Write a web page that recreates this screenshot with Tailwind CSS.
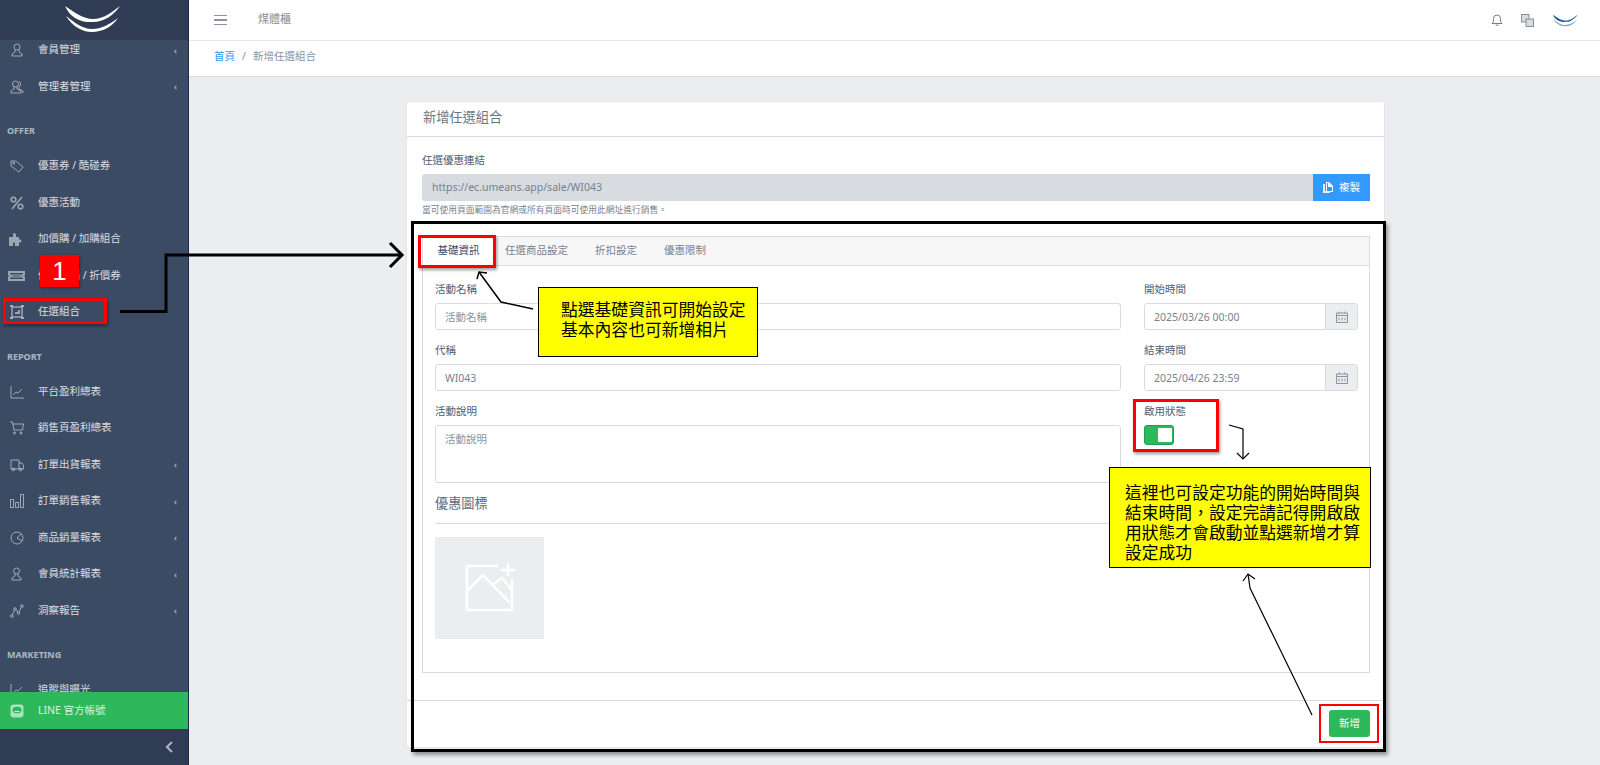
<!DOCTYPE html>
<html lang="zh-Hant">
<head>
  <meta charset="UTF-8" />
  <title>新增任選組合</title>
  <script src="https://cdn.jsdelivr.net/npm/@tailwindcss/browser@4"></script>
</head>
<body class="bg-[#ebedef]">
<div class="relative flex h-[765px] w-[1600px] overflow-hidden font-['Noto_Sans','Noto_Sans_CJK_TC',sans-serif] text-[10.5px] text-[#4f5d73]">

  <!-- Sidebar -->
  <aside class="flex h-full w-[189px] shrink-0 flex-col border-r border-[#1c2a4d] bg-[#3c4b64] text-white/80">
    <div class="z-10 flex h-10 shrink-0 items-center justify-center bg-[#303c54] pb-[2px] pr-[2px]">
      <svg width="60" height="30" viewBox="63 4 60 30" fill="#fff">
        <path d="M65 6C70 18 82 23 93 22C104 22 114 15 120 6C112 12 104 19 93 19C83 19 74 12 65 6Z"/>
        <path d="M66 16C72 26 82 32 92 32C102 32 112 27 118 18C110 24 102 29 92 29C82 29 74 22 66 16Z"/>
      </svg>
    </div>

    <nav class="min-h-0 flex-1 overflow-hidden">
      <div class="mt-[-8px]">
        <div class="flex h-[36.5px] items-center pl-[10px] pr-[11px]">
          <svg class="h-[14px] w-[14px] text-white/50" viewBox="0 0 14 14" fill="none" stroke="currentColor"><circle cx="7" cy="4" r="3"/><path d="M5 7v2l-3 2v2h10v-2L9 9V7"/></svg>
          <span class="ml-[14px] flex-1">會員管理</span><span class="text-[9px] font-bold text-white/50">‹</span>
        </div>
        <div class="flex h-[36.5px] items-center pl-[10px] pr-[11px]">
          <svg class="h-[14px] w-[14px] text-white/50" viewBox="0 0 14 14" fill="none" stroke="currentColor"><circle cx="5.5" cy="4" r="3"/><path d="M4 7v2l-3 2v2h10v-2L7 9V7M9 1.3a3 3 0 0 1 0 5.4V9l4 2v2"/></svg>
          <span class="ml-[14px] flex-1">管理者管理</span><span class="text-[9px] font-bold text-white/50">‹</span>
        </div>

        <div class="h-[43px] pt-[18px] text-[9px] leading-4 font-bold text-white/60 pl-[7px]">OFFER</div>
        <div class="flex h-[36.5px] items-center pl-[10px]">
          <svg class="h-[14px] w-[14px] text-white/50" viewBox="0 0 14 14" fill="none" stroke="currentColor"><path d="M1 2h5l7 6-4 5-8-6Z"/><circle cx="3.7" cy="4.3" r="1"/></svg>
          <span class="ml-[14px]">優惠券 / 酷碰券</span>
        </div>
        <div class="flex h-[36.5px] items-center pl-[10px]">
          <svg class="h-[14px] w-[14px] text-white/50" viewBox="0 0 14 14" fill="none" stroke="currentColor" stroke-width="1.6"><path d="M12 1 2 13"/><circle cx="3.5" cy="3.5" r="2.3"/><circle cx="10.5" cy="10.5" r="2.3"/></svg>
          <span class="ml-[14px]">優惠活動</span>
        </div>
        <div class="flex h-[36.5px] items-center pl-[8px]">
          <svg class="h-[16px] w-[16px] text-white/50" viewBox="0 0 16 16" fill="currentColor"><path d="M1 6h4V3.500a1.500 1.500 0 0 1 3 0V6h3v2.500h1a1.500 1.500 0 0 1 0 3h-1V15H7v-2.500a1 1 0 0 0-2 0V15H1Z"/></svg>
          <span class="ml-[14px]">加價購 / 加購組合</span>
        </div>
        <div class="flex h-[36.5px] items-center pl-[8px]">
          <svg class="h-[16px] w-[17px] text-white/50" viewBox="0 0 17 16" fill="none" stroke="currentColor" stroke-width="2"><path d="M1 4h15v2.500a1.500 1.500 0 0 0 0 3V12H1V9.500a1.500 1.500 0 0 0 0-3Z"/><path d="M4 7h9v2H4Z" stroke-width="1"/></svg>
          <span class="ml-[13px]">優惠代碼 / 折價券</span>
        </div>
        <div class="flex h-[36.5px] items-center pl-[10px]">
          <svg class="h-[14px] w-[14px] text-white/50" viewBox="0 0 14 14" fill="none" stroke="currentColor" stroke-width="1.500"><path d="M2 2h10v10H2Z"/><path d="M0 1h3M11 1h3M0 13h3M11 13h3M5 8h4V5" stroke-width="2"/></svg>
          <span class="ml-[14px]">任選組合</span>
        </div>

        <div class="h-[43px] pt-[18px] text-[9px] leading-4 font-bold text-white/60 pl-[7px]">REPORT</div>
        <div class="flex h-[36.5px] items-center pl-[10px]">
          <svg class="h-[14px] w-[14px] text-white/50" viewBox="0 0 14 14" fill="none" stroke="currentColor"><path d="M1 1v12h13M3 10l3-3 2 1 4-4"/></svg>
          <span class="ml-[14px]">平台盈利總表</span>
        </div>
        <div class="flex h-[36.5px] items-center pl-[10px]">
          <svg class="h-[14px] w-[14px] text-white/50" viewBox="0 0 14 14" fill="none" stroke="currentColor"><path d="M0 1h2.500l1.500 8h8.500L13.500 3H3"/><circle cx="4.500" cy="12" r="1"/><circle cx="11" cy="12" r="1"/></svg>
          <span class="ml-[14px]">銷售頁盈利總表</span>
        </div>
        <div class="flex h-[36.5px] items-center pl-[10px] pr-[11px]">
          <svg class="h-[14px] w-[14px] text-white/50" viewBox="0 0 14 14" fill="none" stroke="currentColor"><path d="M1 2h8v9H1ZM9 5h3l1.500 2.500V11H9"/><circle cx="3.500" cy="11.500" r="1.300"/><circle cx="10.500" cy="11.500" r="1.300"/></svg>
          <span class="ml-[14px] flex-1">訂單出貨報表</span><span class="text-[9px] font-bold text-white/50">‹</span>
        </div>
        <div class="flex h-[36.5px] items-center pl-[10px] pr-[11px]">
          <svg class="h-[14px] w-[14px] text-white/50" viewBox="0 0 14 14" fill="none" stroke="currentColor"><rect x="0.500" y="5.500" width="3" height="8"/><rect x="5.500" y="8.500" width="3" height="5"/><rect x="10.500" y="0.500" width="3" height="13"/></svg>
          <span class="ml-[14px] flex-1">訂單銷售報表</span><span class="text-[9px] font-bold text-white/50">‹</span>
        </div>
        <div class="flex h-[36.5px] items-center pl-[10px] pr-[11px]">
          <svg class="h-[14px] w-[14px] text-white/50" viewBox="0 0 14 14" fill="none" stroke="currentColor"><circle cx="7" cy="7" r="6"/><path d="M11 3 7 7l5 3"/></svg>
          <span class="ml-[14px] flex-1">商品銷量報表</span><span class="text-[9px] font-bold text-white/50">‹</span>
        </div>
        <div class="flex h-[36.5px] items-center pl-[10px] pr-[11px]">
          <svg class="h-[14px] w-[14px] text-white/50" viewBox="0 0 14 14" fill="none" stroke="currentColor"><circle cx="6.500" cy="4" r="3"/><path d="M5 7v2l-3 2v2h9v-2L8 9V7"/></svg>
          <span class="ml-[14px] flex-1">會員統計報表</span><span class="text-[9px] font-bold text-white/50">‹</span>
        </div>
        <div class="flex h-[36.5px] items-center pl-[10px] pr-[11px]">
          <svg class="h-[14px] w-[14px] text-white/50" viewBox="0 0 14 14" fill="none" stroke="currentColor"><circle cx="1.800" cy="12" r="1.300"/><circle cx="5" cy="5" r="1.300"/><circle cx="8.500" cy="9" r="1.300"/><circle cx="12" cy="2" r="1.300"/><path d="m2.400 10.800 2-4.600M5.800 6l2 2M9 7.800l2.400-4.600"/></svg>
          <span class="ml-[14px] flex-1">洞察報告</span><span class="text-[9px] font-bold text-white/50">‹</span>
        </div>

        <div class="h-[43px] pt-[18px] text-[9px] leading-4 font-bold text-white/60 pl-[7px]">MARKETING</div>
        <div class="flex h-[36.5px] items-center pl-[10px]">
          <svg class="h-[14px] w-[14px] text-white/50" viewBox="0 0 14 14" fill="none" stroke="currentColor"><path d="M1 1v12h13M3 10l3-3 2 1 4-4"/></svg>
          <span class="ml-[14px]">追蹤與曝光</span>
        </div>
      </div>
    </nav>

    <div class="z-10 flex h-[37px] shrink-0 items-center bg-[#2eb85c] pl-[10px] text-white/80">
      <svg class="h-[14px] w-[14px]" viewBox="0 0 14 14"><rect width="13" height="13" x="0.500" y="0.500" rx="3" fill="#ffffff" fill-opacity="0.6"/><ellipse cx="7" cy="6" rx="4.500" ry="3.200" fill="#2eb85c"/><path d="M4.500 7.500h5" stroke="#d5f1de"/></svg>
      <span class="ml-[14px]">LINE 官方帳號</span>
    </div>
    <div class="flex h-[36px] shrink-0 items-center justify-end bg-[#303c54] pr-[15px]">
      <svg class="h-[12px] w-[8px]" viewBox="0 0 8 12" fill="none" stroke="#ffffff" stroke-opacity="0.6" stroke-width="2.200"><path d="M7 1 2 6l5 5"/></svg>
    </div>
  </aside>

  <!-- Main -->
  <main class="min-w-0 flex-1">
    <header class="flex h-[41px] items-center border-b border-[#e4e6ea] bg-white">
      <div class="ml-[25px] flex w-[13px] flex-col gap-[3px]">
        <span class="h-[1.500px] bg-[#8a93a2]"></span><span class="h-[1.500px] bg-[#8a93a2]"></span><span class="h-[1.500px] bg-[#8a93a2]"></span>
      </div>
      <span class="ml-[31px] flex-1 pb-[2px] text-[11px] text-[#8a8a90]">煤體櫃</span>
      <svg class="mr-[18px] h-[12px] w-[12px]" viewBox="0 0 12 12" fill="none" stroke="#777d87"><path d="M1 9.500h10L9.500 7.500V4.500a3.500 3.500 0 0 0-7 0v3ZM5 10.500a1 1 0 0 0 2 0"/></svg>
      <svg class="mr-[18px] h-[13px] w-[13px]" viewBox="0 0 13 13" fill="#d8dbe0" stroke="#8a8f98"><rect x="0.500" y="0.500" width="7.500" height="7.500"/><rect x="5" y="5" width="7.500" height="7.500"/></svg>
      <svg class="mr-[21px] h-[15px] w-[27px]" viewBox="63 4 60 30" fill="#1c5b99">
        <path d="M65 6C70 18 82 23 93 22C104 22 114 15 120 6C112 12 104 19 93 19C83 19 74 12 65 6Z"/>
        <path d="M66 16C72 26 82 32 92 32C102 32 112 27 118 18C110 24 102 29 92 29C82 29 74 22 66 16Z" fill="#7fa5c9"/>
      </svg>
    </header>
    <div class="flex h-[36px] items-center border-b border-[#d8dbe0] bg-white pb-[3px] pl-[25px] text-[#8a93a2]">
      <span class="text-[#3399ff]">首頁</span><span class="mx-[7px]">/</span><span>新增任選組合</span>
    </div>

    <!-- Card -->
    <section class="ml-[217px] mt-[24px] w-[979px] rounded-[3px] border border-[#e4e6ea] bg-white">
      <div class="flex h-[35px] items-center border-b border-[#d8dbe0] pb-[2px] pl-[16px] text-[13.2px] text-[#6b7686]">新增任選組合</div>
      <div class="pl-[15px] pr-[14px] pb-[27px]">
        <div class="mt-[15px] h-4 leading-4">任選優惠連結</div>
        <div class="mt-[6px] flex h-[27px]">
          <div class="flex flex-1 items-center rounded-l-[3px] bg-[#d8dbe0] pl-[10px] text-[#768192]">https://ec.umeans.app/sale/WI043</div>
          <button class="flex w-[57px] items-center justify-center gap-[6px] bg-[#3399ff] text-white">
            <svg class="h-[11px] w-[10px]" viewBox="0 0 10 11" fill="#ffffff"><path d="M3 0h3l4 4v6H3Zm1 1v8h5V5H5V1Z"/><path d="M0 2h2v7h5v2H0Z" fill="#ebedef"/></svg>
            複製
          </button>
        </div>
        <div class="h-[18px] text-[8.75px] leading-[18px] text-[#768192]">當可使用頁面範圍為官網或所有頁面時可使用此網址進行銷售。</div>

        <!-- Tabs -->
        <div class="mt-[17px] border border-[#d8dbe0]">
          <div class="flex h-[29px] border-b border-[#d8dbe0] bg-[#f7f7f7]">
            <div class="flex w-[71px] items-center justify-center bg-white text-[#3c4b64]">基礎資訊</div>
            <div class="ml-[11px] flex items-center text-[#768192]">任選商品設定</div>
            <div class="ml-[27px] flex items-center text-[#768192]">折扣設定</div>
            <div class="ml-[27px] flex items-center text-[#768192]">優惠限制</div>
          </div>
          <div class="flex gap-[23px] pl-[12px] pt-[15px] pb-[33px]">
            <div class="w-[686px]">
              <div class="h-4 leading-4">活動名稱</div>
              <div class="mt-[6px] flex h-[27px] items-center rounded-[3px] border border-[#d8dbe0] pl-[9px] pt-[2px] text-[#8a93a2]">活動名稱</div>
              <div class="mt-[12px] h-4 leading-4">代稱</div>
              <div class="mt-[6px] flex h-[27px] items-center rounded-[3px] border border-[#d8dbe0] pl-[9px] pt-[2px] text-[#768192]">WI043</div>
              <div class="mt-[12px] h-4 leading-4">活動說明</div>
              <div class="mt-[6px] h-[58px] rounded-[3px] border border-[#d8dbe0] pl-[9px] pt-[5px] leading-4 text-[#8a93a2]">活動說明</div>
              <div class="mt-[10px] h-5 text-[13.2px] leading-5 text-[#5d6a7c]">優惠圖標</div>
              <div class="mt-[10px] h-px bg-[#d8dbe0]"></div>
              <div class="mt-[13px] flex h-[102px] w-[109px] items-center justify-center bg-[#ebedef]">
                <svg width="109" height="102" viewBox="435 537 109 102" fill="none" stroke="#ffffff" stroke-width="2.500">
                  <path d="M498 566H467V610H512V579"/>
                  <path d="M468 590 483 575 510 603M492 585 502 578 512 590"/>
                  <path d="M508 563V576M501 570H515"/>
                </svg>
              </div>
            </div>
            <div class="w-[214px]">
              <div class="h-4 leading-4">開始時間</div>
              <div class="mt-[6px] flex h-[27px] overflow-hidden rounded-[3px] border border-[#d8dbe0]">
                <div class="flex flex-1 items-center pl-[9px] pt-[2px] text-[#768192]">2025/03/26 00:00</div>
                <div class="flex w-[32px] items-center justify-center border-l border-[#d8dbe0] bg-[#ebedef]">
                  <svg class="h-[12px] w-[12px]" viewBox="0 0 12 12" fill="none" stroke="#8a93a2"><path d="M.5 2h11v9.500H.5ZM.5 4.500h11M3 .5v2M9 .5v2M3 6.500v3M6 6.500v3M9 6.500v3"/></svg>
                </div>
              </div>
              <div class="mt-[12px] h-4 leading-4">結束時間</div>
              <div class="mt-[6px] flex h-[27px] overflow-hidden rounded-[3px] border border-[#d8dbe0]">
                <div class="flex flex-1 items-center pl-[9px] pt-[2px] text-[#768192]">2025/04/26 23:59</div>
                <div class="flex w-[32px] items-center justify-center border-l border-[#d8dbe0] bg-[#ebedef]">
                  <svg class="h-[12px] w-[12px]" viewBox="0 0 12 12" fill="none" stroke="#8a93a2"><path d="M.5 2h11v9.500H.5ZM.5 4.500h11M3 .5v2M9 .5v2M3 6.500v3M6 6.500v3M9 6.500v3"/></svg>
                </div>
              </div>
              <div class="mt-[12px] h-4 leading-4">啟用狀態</div>
              <div class="mt-[6px] flex h-[20px] w-[30px] items-center justify-end rounded-[3px] border border-[#1f9d55] bg-[#2eb85c] pr-[1px]">
                <span class="h-[14px] w-[14px] rounded-[1px] bg-white"></span>
              </div>
            </div>
          </div>
        </div>
      </div>
      <div class="flex h-[47px] justify-end border-t border-[#d8dbe0] pr-[14px] pt-[9px]">
        <button class="h-[27px] w-[41px] rounded-[3px] bg-[#2eb85c] text-white">新增</button>
      </div>
    </section>
  </main>

  <!-- Annotations drawn over the page -->
  <div class="absolute left-[411px] top-[221px] h-[531px] w-[975px] border-[3px] border-black shadow-[2px_3px_4px_rgba(0,0,0,0.4)]"></div>

  <div class="absolute left-[40px] top-[255px] flex h-[32px] w-[39px] items-center justify-center bg-[#ff0000] font-['Liberation_Sans',sans-serif] text-[26px] text-white shadow-[1px_1px_3px_rgba(0,0,0,0.4)]">1</div>
  <div class="absolute left-[3px] top-[298px] h-[26px] w-[104px] border-[3px] border-[#ff0000] shadow-[1px_2px_3px_rgba(0,0,0,0.4)]"></div>
  <div class="absolute left-[418px] top-[235px] h-[33px] w-[78px] border-[3px] border-[#ff0000] shadow-[1px_2px_3px_rgba(0,0,0,0.4)]"></div>
  <div class="absolute left-[1133px] top-[399px] h-[53px] w-[86px] border-[3px] border-[#ff0000] shadow-[1px_2px_3px_rgba(0,0,0,0.4)]"></div>
  <div class="absolute left-[1319px] top-[704px] h-[39px] w-[60px] border-2 border-[#ff0000]"></div>

  <div class="absolute left-[538px] top-[287px] h-[70px] w-[220px] border border-black bg-[#ffff00] pl-[22px] pt-[12px] text-[16.8px] leading-[20px] text-black">點選基礎資訊可開始設定<br>基本內容也可新增相片</div>
  <div class="absolute left-[1109px] top-[467px] h-[101px] w-[262px] border border-black bg-[#ffff00] pl-[15px] pt-[15px] text-[16.8px] leading-[20px] text-black">這裡也可設定功能的開始時間與<br>結束時間，設定完請記得開啟啟<br>用狀態才會啟動並點選新增才算<br>設定成功</div>

  <svg class="pointer-events-none absolute left-0 top-0" width="1600" height="765" fill="none" stroke="#000000">
    <path d="M120 311.500H166V255H401" stroke-width="3"/>
    <path d="M390 243 402 255 390 267" stroke-width="3"/>
    <path d="M533 309 501 302 479 272" stroke-width="1.500"/>
    <path d="M477 279 479 272 487 273" stroke-width="1.500"/>
    <path d="M1229 425 1243 429V458" stroke-width="1.200"/>
    <path d="M1237 453 1243 459 1249 453" stroke-width="1.200"/>
    <path d="M1312 715 1250 588 1248 574" stroke-width="1.200"/>
    <path d="M1243 581 1248 574 1255 579" stroke-width="1.200"/>
  </svg>
</div>
</body>
</html>
